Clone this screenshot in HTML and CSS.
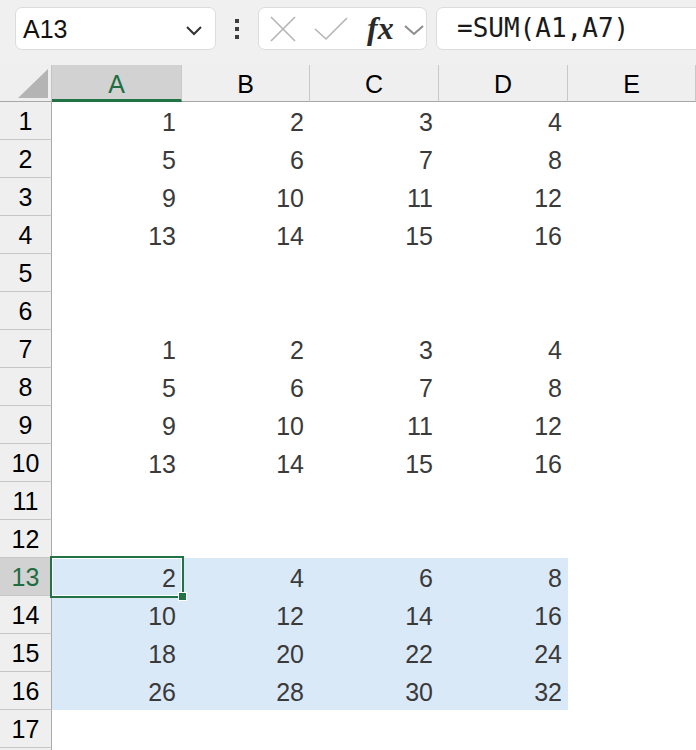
FILE: index.html
```html
<!DOCTYPE html>
<html>
<head>
<meta charset="utf-8">
<link rel="stylesheet" href="styles.css">
</head>
<body>
<div class="topbar">
  <div class="namebox">
    <span class="name">A13</span>
    <svg class="chev" width="18" height="12" viewBox="0 0 18 12"><polyline points="2,3 9,10 16,3" fill="none" stroke="#333" stroke-width="2"/></svg>
  </div>
  <div class="dots"><span></span><span></span><span></span></div>
  <div class="fxgroup">
    <svg class="ico" width="26" height="26" viewBox="0 0 26 26"><path d="M1 1 L25 25 M25 1 L1 25" stroke="#b4b4b4" stroke-width="1.6" fill="none"/></svg>
    <svg class="ico" width="34" height="24" viewBox="0 0 34 24"><polyline points="1,12 12,22 33,1" stroke="#b4b4b4" stroke-width="1.6" fill="none"/></svg>
    <span class="fx">fx</span>
    <svg class="ico small" width="20" height="12" viewBox="0 0 20 12"><polyline points="1,2 10,10 19,2" fill="none" stroke="#8c8c8c" stroke-width="2"/></svg>
  </div>
  <div class="formula">=SUM(A1,A7)</div>
</div>
<div class="sheet" id="sheet">
  <div class="corner"><span class="tri"></span></div>
  <div class="ch sel">A</div>
  <div class="ch">B</div>
  <div class="ch">C</div>
  <div class="ch">D</div>
  <div class="ch">E</div>

  <div class="rh">1</div><div class="c">1</div><div class="c">2</div><div class="c">3</div><div class="c">4</div><div class="c"></div>
  <div class="rh">2</div><div class="c">5</div><div class="c">6</div><div class="c">7</div><div class="c">8</div><div class="c"></div>
  <div class="rh">3</div><div class="c">9</div><div class="c">10</div><div class="c">11</div><div class="c">12</div><div class="c"></div>
  <div class="rh">4</div><div class="c">13</div><div class="c">14</div><div class="c">15</div><div class="c">16</div><div class="c"></div>
  <div class="rh">5</div><div class="c"></div><div class="c"></div><div class="c"></div><div class="c"></div><div class="c"></div>
  <div class="rh">6</div><div class="c"></div><div class="c"></div><div class="c"></div><div class="c"></div><div class="c"></div>
  <div class="rh">7</div><div class="c">1</div><div class="c">2</div><div class="c">3</div><div class="c">4</div><div class="c"></div>
  <div class="rh">8</div><div class="c">5</div><div class="c">6</div><div class="c">7</div><div class="c">8</div><div class="c"></div>
  <div class="rh">9</div><div class="c">9</div><div class="c">10</div><div class="c">11</div><div class="c">12</div><div class="c"></div>
  <div class="rh">10</div><div class="c">13</div><div class="c">14</div><div class="c">15</div><div class="c">16</div><div class="c"></div>
  <div class="rh">11</div><div class="c"></div><div class="c"></div><div class="c"></div><div class="c"></div><div class="c"></div>
  <div class="rh">12</div><div class="c"></div><div class="c"></div><div class="c"></div><div class="c"></div><div class="c"></div>
  <div class="rh selrow">13</div><div class="c hl active">2</div><div class="c hl">4</div><div class="c hl">6</div><div class="c hl">8</div><div class="c"></div>
  <div class="rh">14</div><div class="c hl">10</div><div class="c hl">12</div><div class="c hl">14</div><div class="c hl">16</div><div class="c"></div>
  <div class="rh">15</div><div class="c hl">18</div><div class="c hl">20</div><div class="c hl">22</div><div class="c hl">24</div><div class="c"></div>
  <div class="rh">16</div><div class="c hl">26</div><div class="c hl">28</div><div class="c hl">30</div><div class="c hl">32</div><div class="c"></div>
  <div class="rh">17</div><div class="c"></div><div class="c"></div><div class="c"></div><div class="c"></div><div class="c"></div>
  <div class="rh"></div><div class="c"></div><div class="c"></div><div class="c"></div><div class="c"></div><div class="c"></div>
</div>
</body>
</html>
```

FILE: styles.css
```css
html, body {
  margin: 0;
  padding: 0;
  background: #ffffff;
  overflow: hidden;
  font-family: "Liberation Sans", Arial, sans-serif;
}

.topbar {
  height: 65px;
  background: #f0f0f0;
  display: flex;
  align-items: flex-start;
  padding-top: 7px;
  box-sizing: border-box;
  padding-left: 15px;
}

.namebox {
  width: 201px;
  height: 43px;
  box-sizing: border-box;
  background: #fff;
  border: 1px solid #dcdcdc;
  border-radius: 7px;
  display: flex;
  align-items: center;
  justify-content: space-between;
  padding: 0 12px 0 7px;
}

.name {
  font-size: 25px;
  color: #111;
  margin-top: 1px;
}

.chev {
  margin-top: 2px;
}

.dots {
  width: 42px;
  height: 43px;
  display: flex;
  flex-direction: column;
  align-items: center;
  justify-content: center;
  gap: 4px;
}

.dots span {
  display: block;
  width: 4px;
  height: 4px;
  background: #3c3c3c;
}

.fxgroup {
  width: 169px;
  height: 43px;
  box-sizing: border-box;
  background: #fff;
  border: 1px solid #dcdcdc;
  border-radius: 7px;
  display: flex;
  align-items: center;
  padding-left: 11px;
}

.fxgroup .ico {
  display: block;
}

.fxgroup .ico + .ico {
  margin-left: 18px;
}

.fx {
  font-family: "Liberation Serif", "Times New Roman", serif;
  font-style: italic;
  font-weight: bold;
  font-size: 32px;
  line-height: 32px;
  color: #2a2a2a;
  margin-left: 19px;
  margin-top: -1px;
}

.fxgroup .small {
  margin-left: 10px;
  margin-top: 2px;
}

.formula {
  flex: 1;
  margin-left: 9px;
  margin-right: -12px;
  height: 43px;
  box-sizing: border-box;
  background: #fff;
  border: 1px solid #dcdcdc;
  border-radius: 7px;
  padding-left: 20px;
  font-family: "DejaVu Sans Mono", monospace;
  font-size: 26px;
  line-height: 41px;
  color: #1a1a1a;
}

.sheet {
  display: grid;
  grid-template-columns: 52px 130px 128px 129px 129px 128px;
  grid-template-rows: 37px;
  grid-auto-rows: 38px;
  font-size: 25px;
}

.corner {
  background: #efefef;
  border-bottom: 1px solid #a8a8a8;
  border-right: 1px solid #c4c4c4;
  box-sizing: border-box;
  position: relative;
}

.tri {
  position: absolute;
  right: 3px;
  bottom: 3px;
  width: 0;
  height: 0;
  border-style: solid;
  border-width: 0 0 29px 30px;
  border-color: transparent transparent #b4b4b4 transparent;
}

.ch {
  background: #efefef;
  border-bottom: 1px solid #a8a8a8;
  border-right: 1px solid #c8c8c8;
  box-sizing: border-box;
  display: flex;
  align-items: center;
  justify-content: center;
  color: #000;
  padding-top: 2px;
}

.ch:last-child {
  border-right: none;
}

.ch.sel {
  background: #d2d2d2;
  border-bottom: 3px solid #217346;
  color: #1f6e43;
  padding-top: 4px;
}

.rh {
  background: #efefef;
  border-right: 1px solid #aaaaaa;
  border-bottom: 1px solid #c6c6c6;
  box-sizing: border-box;
  display: flex;
  align-items: center;
  justify-content: center;
  color: #000;
  padding-top: 2px;
}

.rh.selrow {
  background: #d2d2d2;
  color: #1f6e43;
}

.c {
  display: flex;
  align-items: center;
  justify-content: flex-end;
  padding-right: 6px;
  padding-top: 2px;
  color: #3a3a3a;
  box-sizing: border-box;
}

.c.hl {
  background: #dae9f8;
}

.c.active {
  position: relative;
  outline: 2px solid #217346;
  box-shadow: inset 0 0 0 1px #ffffff;
  z-index: 2;
}

.c.active::after {
  content: "";
  position: absolute;
  right: -5px;
  bottom: -5px;
  width: 7px;
  height: 7px;
  background: #217346;
  border: 1px solid #ffffff;
}
```
